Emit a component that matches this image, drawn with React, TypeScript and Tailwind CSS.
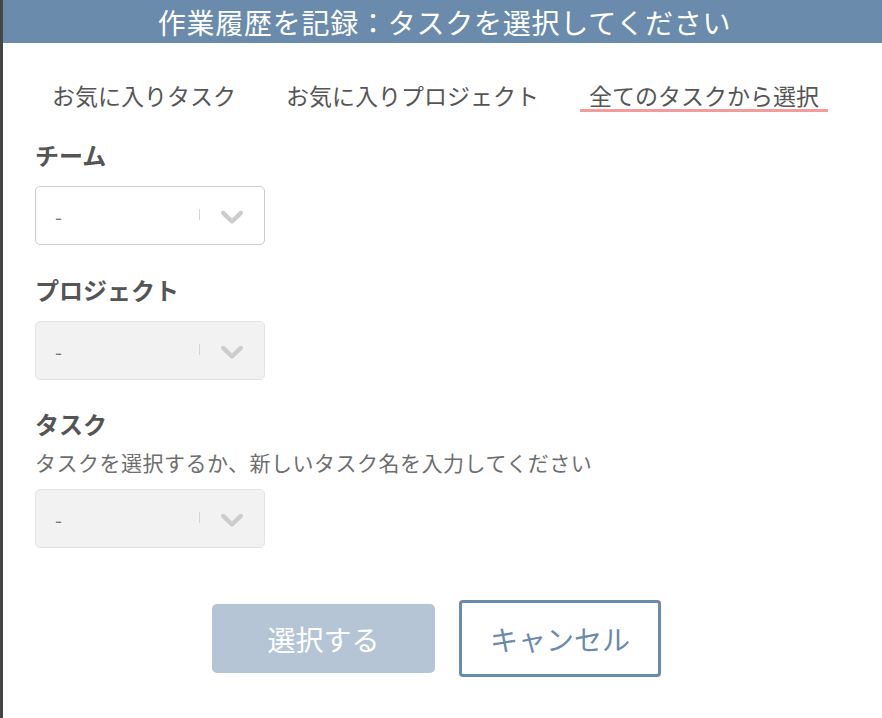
import React from "react";

function Chevron() {
  return (
    <svg width="38" height="38" viewBox="0 0 20 20" className="shrink-0">
      <path
        fill="#cccccc"
        d="M4.516 7.548c0.436-0.446 1.043-0.481 1.576 0l3.908 3.747 3.908-3.747c0.533-0.481 1.141-0.446 1.574 0 0.436 0.445 0.408 1.197 0 1.615-0.406 0.418-4.695 4.502-4.695 4.502-0.217 0.223-0.502 0.335-0.787 0.335s-0.57-0.112-0.789-0.335c0 0-4.287-4.084-4.695-4.502s-0.436-1.17 0-1.615z"
      />
    </svg>
  );
}

function Select({ disabled }: { disabled?: boolean }) {
  return (
    <div
      className={
        disabled
          ? "flex items-center w-[230px] h-[59px] rounded-[5px] border-[1.5px] border-[#e4e4e4] bg-[#f2f2f2] pl-[19px] pr-[13px]"
          : "flex items-center w-[230px] h-[59px] rounded-[5px] border-[1.5px] border-[#cccccc] bg-white pl-[19px] pr-[13px]"
      }
    >
      <span className="flex-1 text-[20px] leading-none text-[#777] pt-[2px]">-</span>
      <span className="w-[1.5px] h-[11px] bg-[#d4d4d4] mr-[13px] -mt-[3px]" />
      <Chevron />
    </div>
  );
}

export default function App() {
  return (
    <div className="flex w-[882px] h-[718px] overflow-hidden bg-white font-['Noto_Sans_CJK_JP','Noto_Sans',sans-serif]">
      <div className="w-[3px] shrink-0 bg-[#454545]" />
      <div className="flex-1 flex flex-col">
        <div className="h-[43px] bg-[#6a8bab] flex items-center justify-center text-white text-[28px] leading-none tracking-[0.75px] pl-[4px]">
          作業履歴を記録：タスクを選択してください
        </div>

        <div className="flex mt-[38px] pl-[40px] gap-[32px] text-[23px] leading-[28px] text-[#555]">
          <div className="px-[9px] border-b-[3px] border-transparent">お気に入りタスク</div>
          <div className="px-[9px] border-b-[3px] border-transparent">お気に入りプロジェクト</div>
          <div className="px-[9px] border-b-[3px] border-[#f49b9b]">全てのタスクから選択</div>
        </div>

        <div className="flex flex-col pl-[32px]">
          <div className="mt-[27px] text-[24px] leading-[32px] font-bold text-[#555]">チーム</div>
          <div className="mt-[15px]">
            <Select />
          </div>

          <div className="mt-[29px] text-[24px] leading-[32px] font-bold text-[#555]">プロジェクト</div>
          <div className="mt-[15px]">
            <Select disabled />
          </div>

          <div className="mt-[28px] text-[24px] leading-[32px] font-bold text-[#555]">タスク</div>
          <div className="mt-[8px] text-[21px] leading-[28px] tracking-[0.5px] text-[#6e6e6e]">
            タスクを選択するか、新しいタスク名を入力してください
          </div>
          <div className="mt-[13px]">
            <Select disabled />
          </div>
        </div>

        <div className="flex items-center mt-[52px] pl-[209px] gap-[24px]">
          <div className="w-[223px] h-[69px] rounded-[5px] bg-[#b5c5d6] flex items-center justify-center text-white text-[28px] leading-none">
            選択する
          </div>
          <div className="w-[202px] h-[77px] rounded-[4px] border-[3px] border-[#6a8bab] bg-white flex items-center justify-center text-[#6a8bab] text-[28px] leading-none">
            キャンセル
          </div>
        </div>
      </div>
    </div>
  );
}
